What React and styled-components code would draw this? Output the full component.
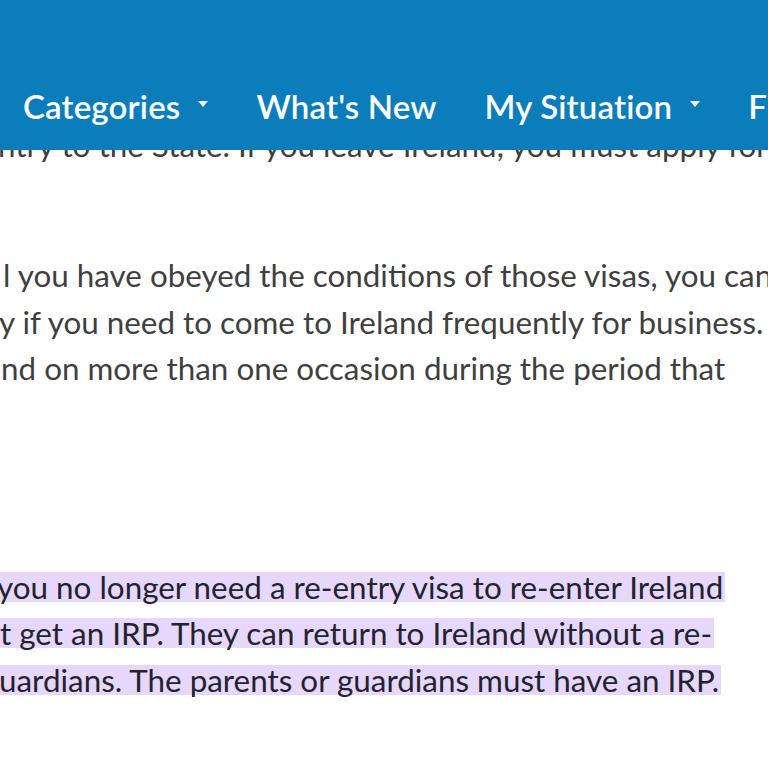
import React from "react";
import styled, { createGlobalStyle } from "styled-components";

const GlobalStyle = createGlobalStyle`
  html, body {
    margin: 0;
    padding: 0;
    background: #ffffff;
    overflow: hidden;
  }
  body {
    font-family: Lato, "Open Sans", sans-serif;
  }
`;

const Page = styled.div`
  width: 768px;
  height: 768px;
  overflow: hidden;
  background: #fff;
`;

const Header = styled.header`
  position: relative;
  z-index: 2;
  height: 150px;
  background: #0b7dbb;
  display: flex;
  align-items: flex-end;
`;

const Nav = styled.nav`
  display: flex;
  align-items: center;
  gap: 48px;
  padding: 0 0 24px 23px;
  white-space: nowrap;
`;

const NavItem = styled.a`
  display: flex;
  align-items: center;
  gap: 18px;
  color: #ffffff;
  font-size: 33px;
  font-weight: 600;
  line-height: 40px;
  letter-spacing: 0.15px;
  text-decoration: none;
`;

const Caret = styled.span`
  width: 0;
  height: 0;
  border-left: 5px solid transparent;
  border-right: 5px solid transparent;
  border-top: 6px solid #ffffff;
  margin-top: -5px;
`;

const Body = styled.main`
  color: #3f3f3f;
  font-size: 31.4px;
  line-height: 46.5px;
`;

const ClipLine = styled.div`
  height: 18px;
  overflow: hidden;
  display: flex;
  align-items: flex-end;
  white-space: nowrap;
`;

const Para = styled.div`
  margin-top: ${(p) => p.$gap}px;
`;

const Line = styled.div`
  white-space: nowrap;
  margin-left: ${(p) => p.$indent || 0}px;
`;

const Mark = styled.span`
  display: inline-block;
  background: #e6d7fc;
  color: #23232e;
  line-height: 30px;
  vertical-align: -4px;
  padding-right: 2px;
`;

export default function App() {
  return (
    <Page>
      <GlobalStyle />
      <Header>
        <Nav>
          <NavItem>
            Categories <Caret />
          </NavItem>
          <NavItem>What's New</NavItem>
          <NavItem>
            My Situation <Caret />
          </NavItem>
          <NavItem>Find</NavItem>
        </Nav>
      </Header>
      <Body>
        <ClipLine>
          <Line $indent={-2}>ntry to the State. If you leave Ireland, you must apply for a</Line>
        </ClipLine>
        <Para $gap={84}>
          <Line $indent={3}>l you have obeyed the conditions of those visas, you can</Line>
          <Line $indent={-1}>y if you need to come to Ireland frequently for business.</Line>
          <Line $indent={1}>nd on more than one occasion during the period that</Line>
        </Para>
        <Para $gap={168}>
          <Line $indent={-3}>
            <Mark>you no longer need a re-entry visa to re-enter Ireland</Mark>
          </Line>
          <Line>
            <Mark>t get an IRP. They can return to Ireland without a re-</Mark>
          </Line>
          <Line $indent={-1}>
            <Mark>uardians. The parents or guardians must have an IRP.</Mark>
          </Line>
        </Para>
      </Body>
    </Page>
  );
}
